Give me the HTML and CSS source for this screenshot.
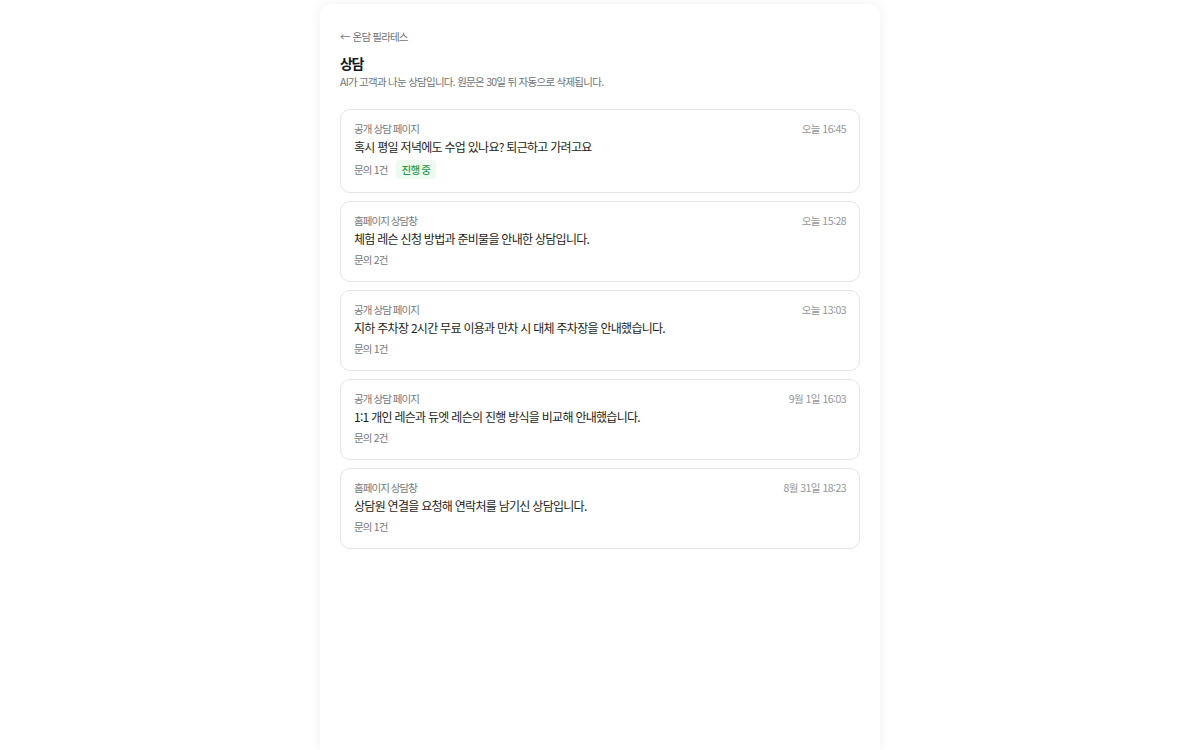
FILE: index.html
```html
<!DOCTYPE html>
<html lang="ko">
<head>
    <meta charset="UTF-8">
    <meta name="viewport" content="width=device-width, initial-scale=1.0">
    <title>상담</title>
    <link rel="stylesheet" href="styles.css">
</head>
<body>
    <div class="container">
        <a class="back-link" href="#"><span class="arrow">←</span> 온담 필라테스</a>
        <h1>상담</h1>
        <p class="subtitle">AI가 고객과 나눈 상담입니다. 원문은 30일 뒤 자동으로 삭제됩니다.</p>

        <div class="chat-list">
            <div class="chat-card">
                <div class="chat-head">
                    <span class="chat-source">공개 상담 페이지</span>
                    <span class="chat-time">오늘 16:45</span>
                </div>
                <div class="chat-summary">혹시 평일 저녁에도 수업 있나요? 퇴근하고 가려고요</div>
                <div class="chat-meta">
                    <span>문의 1건</span>
                    <span class="badge-live">진행 중</span>
                </div>
            </div>

            <div class="chat-card">
                <div class="chat-head">
                    <span class="chat-source">홈페이지 상담창</span>
                    <span class="chat-time">오늘 15:28</span>
                </div>
                <div class="chat-summary">체험 레슨 신청 방법과 준비물을 안내한 상담입니다.</div>
                <div class="chat-meta">
                    <span>문의 2건</span>
                </div>
            </div>

            <div class="chat-card">
                <div class="chat-head">
                    <span class="chat-source">공개 상담 페이지</span>
                    <span class="chat-time">오늘 13:03</span>
                </div>
                <div class="chat-summary">지하 주차장 2시간 무료 이용과 만차 시 대체 주차장을 안내했습니다.</div>
                <div class="chat-meta">
                    <span>문의 1건</span>
                </div>
            </div>

            <div class="chat-card">
                <div class="chat-head">
                    <span class="chat-source">공개 상담 페이지</span>
                    <span class="chat-time">9월 1일 16:03</span>
                </div>
                <div class="chat-summary">1:1 개인 레슨과 듀엣 레슨의 진행 방식을 비교해 안내했습니다.</div>
                <div class="chat-meta">
                    <span>문의 2건</span>
                </div>
            </div>

            <div class="chat-card">
                <div class="chat-head">
                    <span class="chat-source">홈페이지 상담창</span>
                    <span class="chat-time">8월 31일 18:23</span>
                </div>
                <div class="chat-summary">상담원 연결을 요청해 연락처를 남기신 상담입니다.</div>
                <div class="chat-meta">
                    <span>문의 1건</span>
                </div>
            </div>
        </div>
    </div>
</body>
</html>
```

FILE: styles.css
```css
* {
    margin: 0;
    padding: 0;
    box-sizing: border-box;
}

body {
    font-family: "Noto Sans CJK KR", "Noto Sans", sans-serif;
    background: #ffffff;
    color: #1f2328;
}

.container {
    width: 560px;
    min-height: 746px;
    margin: 4px auto 0;
    background: white;
    border-radius: 12px 12px 0 0;
    box-shadow: 0 0 14px rgba(0, 0, 0, 0.06);
    padding: 25px 20px 40px;
}

.back-link {
    display: block;
    font-size: 10.5px;
    line-height: 16px;
    letter-spacing: -0.08em;
    color: #6f7378;
    text-decoration: none;
}

.back-link .arrow {
    letter-spacing: 0;
}

h1 {
    margin-top: 8px;
    font-size: 14px;
    line-height: 20px;
    font-weight: 700;
    letter-spacing: -0.1em;
    color: #16181b;
}

.subtitle {
    margin-top: 1px;
    font-size: 10.5px;
    line-height: 16px;
    letter-spacing: -0.07em;
    color: #6f7378;
}

.chat-list {
    margin-top: 19px;
    display: flex;
    flex-direction: column;
    gap: 8px;
}

.chat-card {
    border: 1px solid #e4e5e7;
    border-radius: 10px;
    padding: 11px 13px 13px 13px;
}

.chat-head {
    display: flex;
    justify-content: space-between;
    align-items: center;
    font-size: 10.5px;
    line-height: 16px;
    letter-spacing: -0.09em;
}

.chat-source {
    color: #74787d;
}

.chat-time {
    color: #92969b;
    letter-spacing: -0.05em;
}

.chat-summary {
    font-size: 12px;
    line-height: 20px;
    letter-spacing: -0.06em;
    color: #1c1e21;
}

.chat-meta {
    margin-top: 3px;
    display: flex;
    align-items: center;
    gap: 8px;
    font-size: 10.5px;
    line-height: 16px;
    letter-spacing: -0.08em;
    color: #74787d;
}

.badge-live {
    background: #eefaf1;
    color: #1f9d4c;
    font-weight: 500;
    line-height: 17px;
    border-radius: 4px;
    padding: 1px 6px;
}
```
